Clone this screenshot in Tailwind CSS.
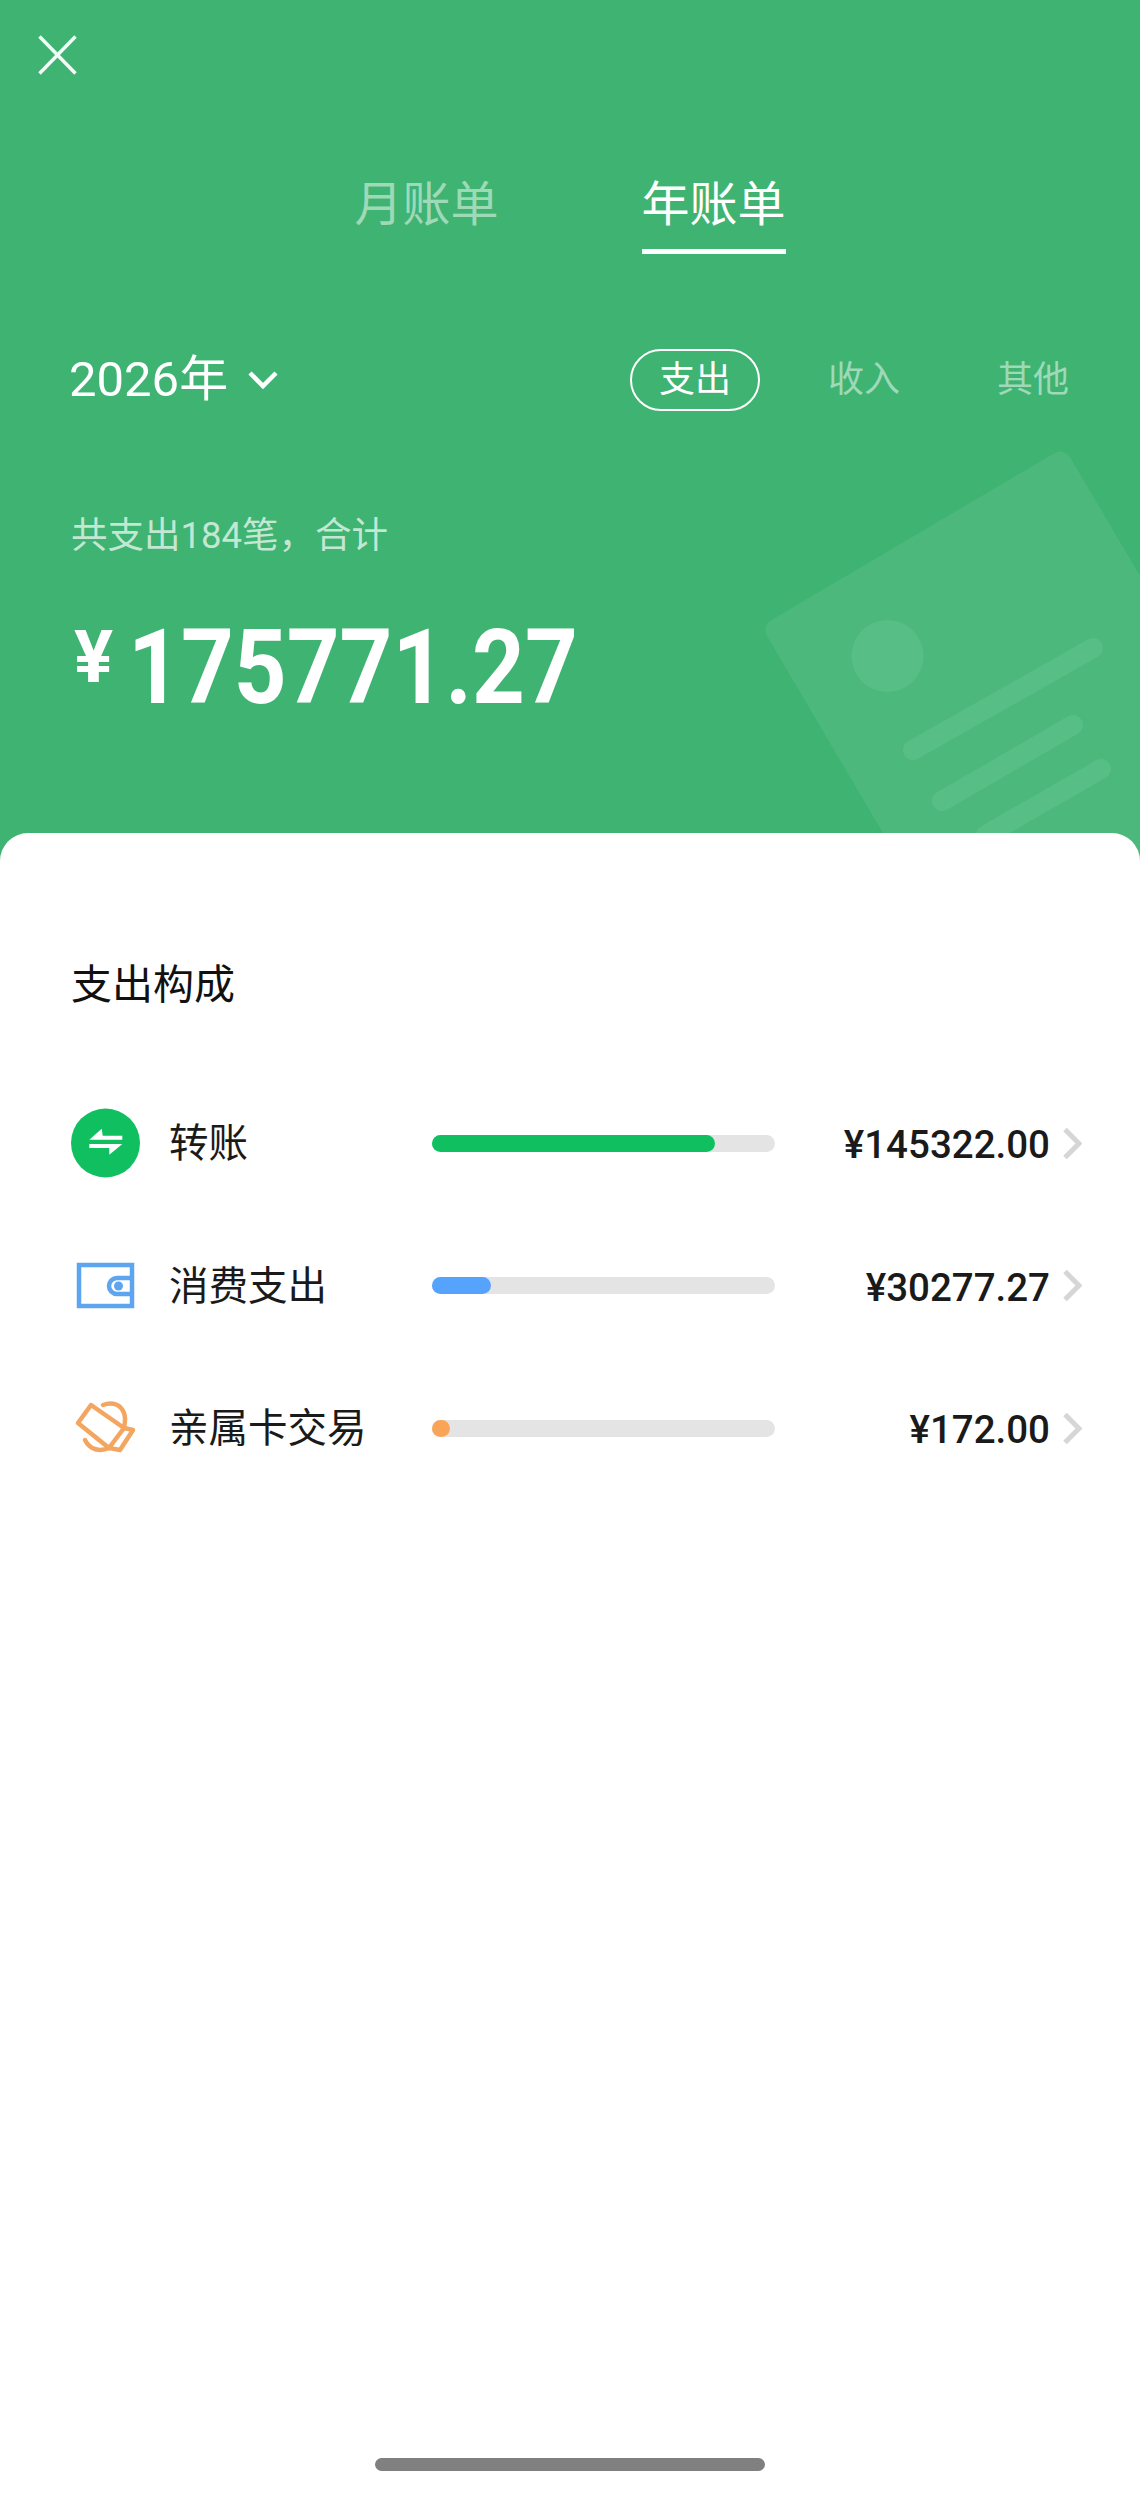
<!DOCTYPE html>
<html lang="zh-CN">
<head>
<meta charset="utf-8">
<title>年账单</title>
<script src="https://cdn.jsdelivr.net/npm/@tailwindcss/browser@4"></script>
</head>
<body class="m-0">
<div class="relative w-[1140px] h-[2494px] flex flex-col overflow-hidden bg-[#3eb372] font-['Roboto','Noto_Sans_CJK_SC',sans-serif]">
  <svg class="absolute left-0 top-0" width="1140" height="900" viewBox="0 0 1140 900" fill="none">
    <rect x="761" y="626" width="352" height="520" rx="12" transform="rotate(-30.5 761 626)" fill="#4cb87c"/>
    <circle cx="887.5" cy="656" r="36" fill="#57be86"/>
    <path d="M913 750 1093 648M942 801 1073 725M986 835 1101 769" stroke="#57be86" stroke-width="20" stroke-linecap="round"/>
  </svg>

  <header class="relative h-[833px] flex flex-col shrink-0">
    <div class="mt-[35px] ml-[38px] w-[39px] h-[40px]">
      <svg width="39" height="40" viewBox="0 0 39 40" fill="none"><path d="M1.5 1.5 37.5 38.5M37.5 1.5 1.5 38.5" stroke="#f2fbf6" stroke-width="3.5"/></svg>
    </div>
    <nav class="mt-[94px] flex justify-center gap-[143px] text-[48px] leading-[72px]">
      <div class="text-white/50 pb-[13px]">月账单</div>
      <div class="text-white pb-[8px] border-b-[5px] border-white">年账单</div>
    </nav>
    <div class="mt-[95px] pl-[69px] pr-[42px] h-[62px] flex items-center justify-between">
      <div class="flex items-center gap-[20px] text-white text-[49px] leading-[62px]">
        <span>2026年</span>
        <svg width="30" height="20" viewBox="0 0 30 20" fill="none"><path d="M2 3 15 16 28 3" stroke="#fff" stroke-width="4.5"/></svg>
      </div>
      <div class="flex gap-[39px] text-[36px] text-center leading-[58px]">
        <div class="w-[130px] h-[62px] rounded-full border-2 border-white text-white">支出</div>
        <div class="w-[130px] h-[62px] leading-[62px] text-white/50">收入</div>
        <div class="w-[130px] h-[62px] leading-[62px] text-white/50">其他</div>
      </div>
    </div>
    <p class="mt-[98px] ml-[71px] text-[36.5px] leading-[54px] text-white/70">共支出184笔，合计</p>
    <div class="mt-[53px] ml-[74px] flex items-start text-white font-bold">
      <span class="mt-[5px] text-[73px] leading-[73px]">¥</span>
      <span class="ml-[15px] text-[103px] leading-[103px] origin-left scale-x-[0.895]">175771.27</span>
    </div>
  </header>

  <main class="relative flex-1 flex flex-col bg-white rounded-t-[28px]">
    <h2 class="mt-[122px] ml-[71px] text-[41px] leading-[60px] font-normal text-[#111]">支出构成</h2>
    <ul class="mt-[93px] ml-[71px] flex flex-col gap-[72.5px] text-[#1a1a1a]">
      <li class="h-[70px] flex items-center">
        <svg class="mr-[29px] shrink-0" width="69" height="70" viewBox="0 0 69 70">
          <circle cx="34.5" cy="35" r="34.5" fill="#10c060"/>
          <path d="M18.3 31.7 30.7 20.7 31.7 27.7H51.3V31.7ZM18.3 36H51.3L38.3 46.7V40H18.3Z" fill="#fff"/>
        </svg>
        <span class="w-[263px] pt-[2px] text-[39.5px] leading-[54px]">转账</span>
        <div class="w-[343px] h-[17px] rounded-full bg-[#e4e4e4]"><div class="h-full rounded-full bg-[#10c060]" style="width:283px"></div></div>
        <span class="w-[275px] pt-[4px] text-right text-[38.5px] leading-[54px] font-medium">¥145322.00</span>
        <svg class="ml-[13px]" width="19" height="31" viewBox="0 0 19 31" fill="none"><path d="M2 1.5 16 15.5 2 29.5" stroke="#d6d6d6" stroke-width="5"/></svg>
      </li>
      <li class="h-[70px] flex items-center">
        <svg class="mr-[29px] shrink-0" width="69" height="70" viewBox="0 0 69 70" fill="none">
          <rect x="8" y="14" width="53" height="41" stroke="#5ea5f0" stroke-width="4.5"/>
          <path d="M61 27H46A8 8 0 0 0 46 43H61" stroke="#5ea5f0" stroke-width="4.5"/>
          <circle cx="47.5" cy="35" r="4.5" fill="#5ea5f0"/>
        </svg>
        <span class="w-[263px] pt-[2px] text-[39.5px] leading-[54px]">消费支出</span>
        <div class="w-[343px] h-[17px] rounded-full bg-[#e4e4e4]"><div class="h-full rounded-full bg-[#55a3fc]" style="width:59px"></div></div>
        <span class="w-[275px] pt-[4px] text-right text-[38.5px] leading-[54px] font-medium">¥30277.27</span>
        <svg class="ml-[13px]" width="19" height="31" viewBox="0 0 19 31" fill="none"><path d="M2 1.5 16 15.5 2 29.5" stroke="#d6d6d6" stroke-width="5"/></svg>
      </li>
      <li class="h-[70px] flex items-center">
        <svg class="mr-[29px] shrink-0" width="69" height="70" viewBox="0 0 69 70" fill="none" stroke="#f4a55f" stroke-width="4.5" stroke-linejoin="round" stroke-linecap="round">
          <path d="M20 12 53 35 38 55 7 30Z"/>
          <path d="M53 35 62 37 49 57 38 55"/>
          <path d="M32 12C42 8 50 12 53 20 55 25 54 30 53 34"/>
          <path d="M14 47C19 57 29 59 38 55"/>
        </svg>
        <span class="w-[263px] pt-[2px] text-[39.5px] leading-[54px]">亲属卡交易</span>
        <div class="w-[343px] h-[17px] rounded-full bg-[#e4e4e4]"><div class="h-full rounded-full bg-[#f9a558]" style="width:18px"></div></div>
        <span class="w-[275px] pt-[4px] text-right text-[38.5px] leading-[54px] font-medium">¥172.00</span>
        <svg class="ml-[13px]" width="19" height="31" viewBox="0 0 19 31" fill="none"><path d="M2 1.5 16 15.5 2 29.5" stroke="#d6d6d6" stroke-width="5"/></svg>
      </li>
    </ul>
    <div class="mt-auto mb-[23px] mx-auto w-[390px] h-[13px] rounded-full bg-[#808080]"></div>
  </main>
</div>
</body>
</html>
